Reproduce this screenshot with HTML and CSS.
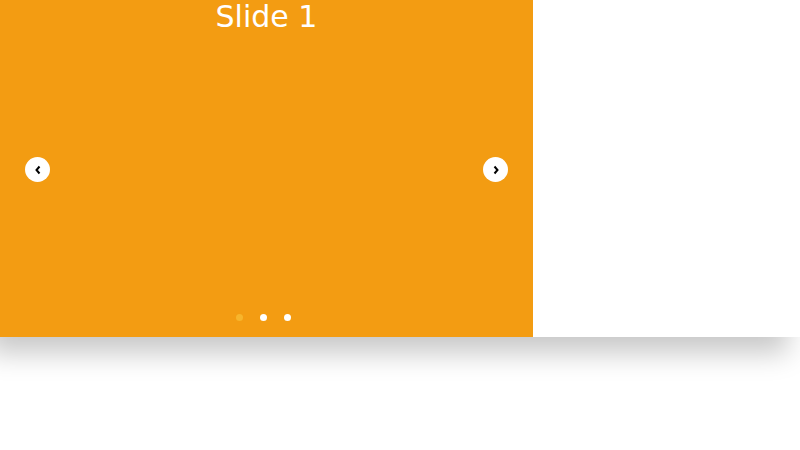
FILE: index.html
```html
<!DOCTYPE html>
<html>
<head>
<meta charset="utf-8">
<link rel="stylesheet" href="styles.css">
</head>
<body>
<div class="page">
  <div class="carousel">
    <div class="slide">
      <h1 class="slide-title">Slide 1</h1>
      <button class="arrow arrow-prev" aria-label="Previous">
        <svg width="8" height="10" viewBox="0 0 8 10"><path d="M5.5 1.5 L2.5 5 L5.5 8.5" fill="none" stroke="#000" stroke-width="2"/></svg>
      </button>
      <button class="arrow arrow-next" aria-label="Next">
        <svg width="8" height="10" viewBox="0 0 8 10"><path d="M2.5 1.5 L5.5 5 L2.5 8.5" fill="none" stroke="#000" stroke-width="2"/></svg>
      </button>
      <div class="dots">
        <span class="dot active"></span>
        <span class="dot"></span>
        <span class="dot"></span>
      </div>
    </div>
  </div>
</div>
</body>
</html>
```
FILE: styles.css
```css
html, body {
  margin: 0;
  padding: 0;
  background: #fff;
  font-family: "DejaVu Sans", sans-serif;
}
.page {
  width: 800px;
  height: 450px;
  overflow: hidden;
  background: #fff;
}
.carousel {
  position: relative;
  width: 800px;
  height: 337px;
  background: #fff;
  display: flex;
  box-shadow: -12px 16px 26px rgba(0, 0, 0, 0.22);
}
.slide {
  position: relative;
  width: 533px;
  height: 337px;
  background: #f39c12;
  display: flex;
  flex-direction: column;
  align-items: center;
}
.slide-title {
  margin: 0;
  font-size: 30px;
  line-height: 33px;
  font-weight: normal;
  color: #fff;
}
.arrow {
  position: absolute;
  top: 157px;
  width: 25px;
  height: 25px;
  border: none;
  border-radius: 50%;
  background: #fff;
  padding: 0;
  display: flex;
  align-items: center;
  justify-content: center;
}
.arrow-prev { left: 25px; }
.arrow-next { right: 25px; }
.dots {
  position: absolute;
  top: 314px;
  left: 0;
  right: 0;
  padding-right: 7px;
  display: flex;
  justify-content: center;
  gap: 17px;
}
.dot {
  width: 7px;
  height: 7px;
  border-radius: 50%;
  background: #fff;
}
.dot.active {
  background: #f7b52c;
}
```
